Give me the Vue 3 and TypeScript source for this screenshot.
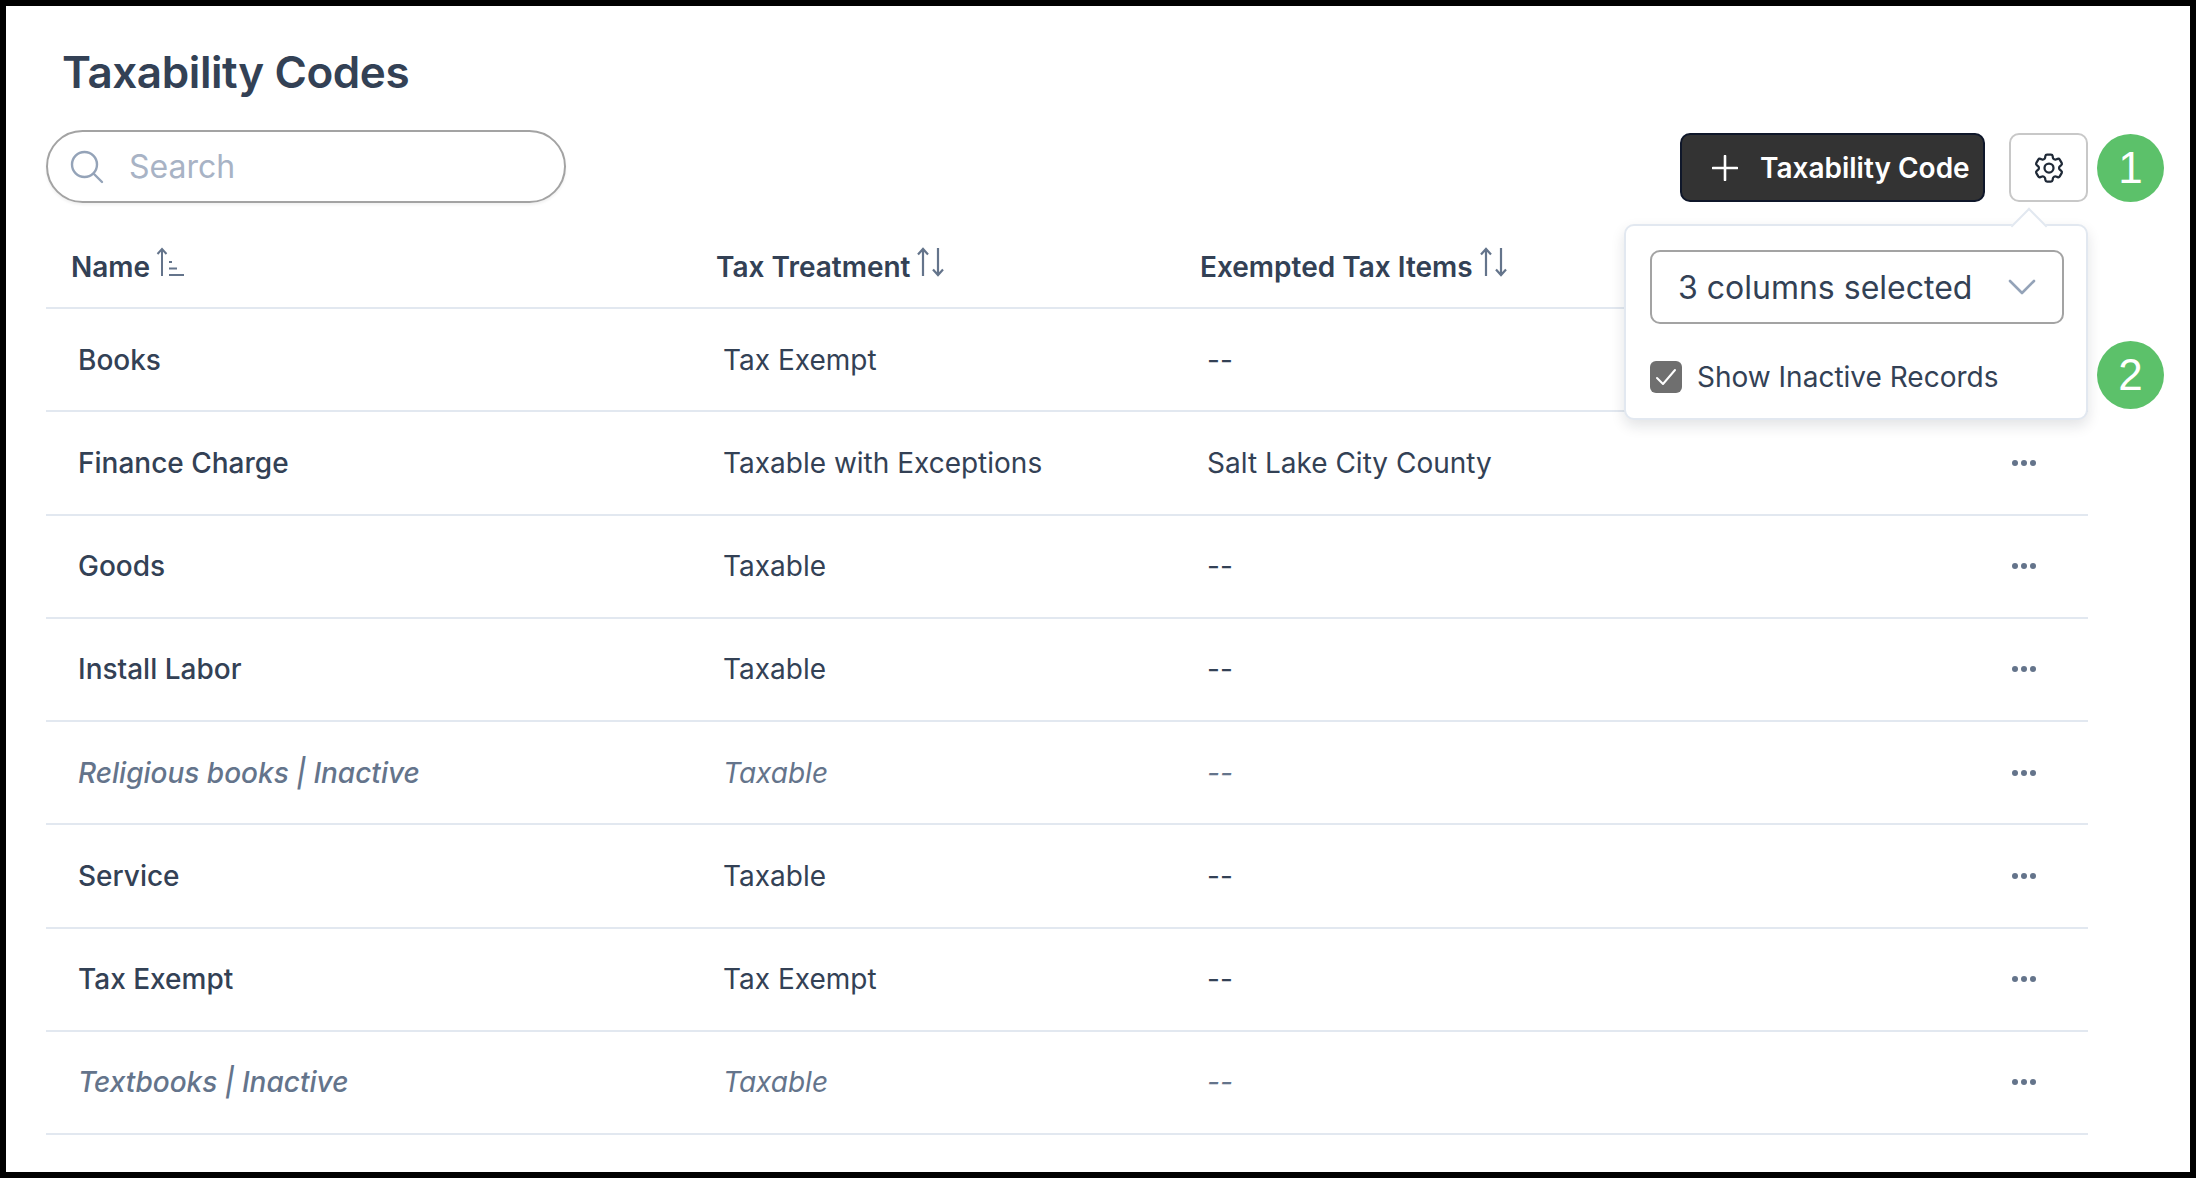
<script setup lang="ts">
interface Row { name: string; treatment: string; items: string; inactive?: boolean }
const rows: Row[] = [
  { name: 'Books', treatment: 'Tax Exempt', items: '--' },
  { name: 'Finance Charge', treatment: 'Taxable with Exceptions', items: 'Salt Lake City County' },
  { name: 'Goods', treatment: 'Taxable', items: '--' },
  { name: 'Install Labor', treatment: 'Taxable', items: '--' },
  { name: 'Religious books | Inactive', treatment: 'Taxable', items: '--', inactive: true },
  { name: 'Service', treatment: 'Taxable', items: '--' },
  { name: 'Tax Exempt', treatment: 'Tax Exempt', items: '--' },
  { name: 'Textbooks | Inactive', treatment: 'Taxable', items: '--', inactive: true },
]
</script>

<template>
  <div class="frame">
    <h1 class="title">Taxability Codes</h1>
    <div class="toolbar">
      <div class="search">
        <svg class="search-icon" viewBox="0 0 34 34" fill="none" stroke="#94a3b8" stroke-width="2.4" stroke-linecap="round">
          <circle cx="14.5" cy="14.5" r="12.5" />
          <path d="M24 24l8 8" />
        </svg>
        <span class="placeholder">Search</span>
      </div>
      <div class="actions">
        <button class="primary" type="button">
          <svg class="plus" viewBox="0 0 26 26" fill="none" stroke="#fff" stroke-width="2.6" stroke-linecap="round">
            <path d="M13 1v24M1 13h24" />
          </svg>
          <span>Taxability Code</span>
        </button>
        <button class="gear" type="button" aria-label="Settings">
          <svg viewBox="0 0 24 24" fill="none" stroke="#1f2937" stroke-width="1.5" stroke-linecap="round" stroke-linejoin="round">
            <path d="M9.594 3.94c.09-.542.56-.94 1.11-.94h2.593c.55 0 1.02.398 1.11.94l.213 1.281c.063.374.313.686.645.87.074.04.147.083.22.127.324.196.72.257 1.075.124l1.217-.456a1.125 1.125 0 011.37.49l1.296 2.247a1.125 1.125 0 01-.26 1.431l-1.003.827c-.293.24-.438.613-.431.992a6.759 6.759 0 010 .255c-.007.378.138.75.43.99l1.005.828c.424.35.534.954.26 1.43l-1.298 2.247a1.125 1.125 0 01-1.369.491l-1.217-.456c-.355-.133-.75-.072-1.076.124a6.57 6.57 0 01-.22.128c-.331.183-.581.495-.644.869l-.213 1.28c-.09.543-.56.941-1.11.941h-2.594c-.55 0-1.02-.398-1.11-.94l-.213-1.281c-.062-.374-.312-.686-.644-.87a6.52 6.52 0 01-.22-.127c-.325-.196-.72-.257-1.076-.124l-1.217.456a1.125 1.125 0 01-1.369-.49l-1.297-2.247a1.125 1.125 0 01.26-1.431l1.004-.827c.292-.24.437-.613.43-.992a6.932 6.932 0 010-.255c.007-.378-.138-.75-.43-.99l-1.004-.828a1.125 1.125 0 01-.26-1.43l1.297-2.247a1.125 1.125 0 011.37-.491l1.216.456c.356.133.751.072 1.076-.124.072-.044.146-.087.22-.128.332-.183.582-.495.644-.869l.214-1.281z" />
            <path d="M15 12a3 3 0 11-6 0 3 3 0 016 0z" />
          </svg>
        </button>
        <span class="badge badge-one">1</span>
        <div class="popover">
          <div class="caret"></div>
          <div class="select">
            <span>3 columns selected</span>
            <svg class="chevron" viewBox="0 0 28 16" fill="none" stroke="#94a3b8" stroke-width="2.6" stroke-linecap="round" stroke-linejoin="round">
              <path d="M2 2l12 12L26 2" />
            </svg>
          </div>
          <label class="check-row">
            <span class="checkbox">
              <svg viewBox="0 0 32 32" fill="none" stroke="#fff" stroke-width="2" stroke-linecap="round" stroke-linejoin="round">
                <path d="M7 17l6 6L25 9" />
              </svg>
            </span>
            <span>Show Inactive Records</span>
          </label>
        </div>
        <span class="badge badge-two">2</span>
      </div>
    </div>

    <div class="grid header">
      <div class="th">
        <span>Name</span>
        <svg class="sort sort-name" viewBox="0 0 30 30" fill="none" stroke="#64748b" stroke-width="2">
          <path d="M6 29V2M1.500 7L6 2l4.500 5" />
          <path d="M13 15h3M13 21.500h8M13 28h15" />
        </svg>
      </div>
      <div class="th">
        <span>Tax Treatment</span>
        <svg class="sort" viewBox="0 0 30 30" fill="none" stroke="#64748b" stroke-width="2.200">
          <path d="M7 29V2M2 7.500L7 2l5 5.500" />
          <path d="M22 1v27M17 22.500l5 5.500 5-5.500" />
        </svg>
      </div>
      <div class="th">
        <span>Exempted Tax Items</span>
        <svg class="sort" viewBox="0 0 30 30" fill="none" stroke="#64748b" stroke-width="2.200">
          <path d="M7 29V2M2 7.500L7 2l5 5.500" />
          <path d="M22 1v27M17 22.500l5 5.500 5-5.500" />
        </svg>
      </div>
    </div>

    <div v-for="row in rows" :key="row.name" class="grid row" :class="{ inactive: row.inactive }">
      <div class="cell name">{{ row.name }}</div>
      <div class="cell">{{ row.treatment }}</div>
      <div class="cell">{{ row.items }}</div>
      <div class="dots"><i></i><i></i><i></i></div>
    </div>
  </div>
</template>

<style>
html, body { margin: 0; background: #fff; }
</style>

<style scoped>
.frame {
  box-sizing: border-box;
  width: 2196px;
  height: 1178px;
  border: 6px solid #000;
  background: #fff;
  padding: 0 102px 0 40px;
  overflow: hidden;
  font-family: Inter, "Liberation Sans", sans-serif;
  color: #334155;
}
.title {
  margin: 42px 0 0 16px;
  font-size: 44px;
  line-height: 48px;
  font-weight: 600;
  letter-spacing: -0.4px;
  color: #334155;
}
.toolbar {
  margin-top: 34px;
  display: flex;
  justify-content: space-between;
  align-items: flex-start;
}
.search {
  box-sizing: border-box;
  width: 520px;
  height: 73px;
  display: flex;
  align-items: center;
  padding-left: 22px;
  gap: 25px;
  border: 2px solid #a3a3a3;
  border-radius: 37px;
  box-shadow: 0 2px 3px rgba(0, 0, 0, .06);
}
.search-icon { width: 34px; height: 34px; }
.placeholder { font-size: 32px; color: #a8b3c5; }
.actions {
  position: relative;
  display: flex;
  align-items: center;
  gap: 24px;
  margin-top: 3px;
}
.primary {
  box-sizing: border-box;
  width: 305px;
  height: 69px;
  display: flex;
  align-items: center;
  padding: 0 0 0 30px;
  gap: 22px;
  background: #333;
  border: 2px solid #0f172a;
  border-radius: 10px;
  color: #fff;
  font: 600 28px Inter, "Liberation Sans", sans-serif;
}
.plus { width: 26px; height: 26px; }
.gear {
  box-sizing: border-box;
  width: 79px;
  height: 69px;
  padding: 0;
  display: flex;
  align-items: center;
  justify-content: center;
  background: #fff;
  border: 2px solid #c8c8c8;
  border-radius: 10px;
}
.gear svg { width: 36px; height: 36px; }
.badge {
  position: absolute;
  left: 417px;
  width: 67px;
  height: 68px;
  border-radius: 50%;
  background: #5cc16a;
  color: #fff;
  display: flex;
  align-items: center;
  justify-content: center;
  font: 400 44px "Liberation Sans", Arial, sans-serif;
}
.badge-one { top: 1px; }
.badge-two { top: 208px; }
.popover {
  position: absolute;
  top: 91px;
  left: -56px;
  box-sizing: border-box;
  width: 464px;
  height: 196px;
  padding: 24px 24px 0;
  background: #fff;
  border: 2px solid #e2e8f0;
  border-radius: 10px;
  box-shadow: 0 6px 14px rgba(15, 23, 42, .12);
  z-index: 2;
}
.caret {
  position: absolute;
  top: -13px;
  left: 390px;
  width: 24px;
  height: 24px;
  background: #fff;
  border-top: 2px solid #e2e8f0;
  border-left: 2px solid #e2e8f0;
  transform: rotate(45deg);
}
.select {
  box-sizing: border-box;
  width: 414px;
  height: 74px;
  display: flex;
  align-items: center;
  justify-content: space-between;
  padding: 0 26px;
  border: 2px solid #a3a3a3;
  border-radius: 10px;
  font-size: 32px;
  color: #334155;
}
.chevron { width: 28px; height: 16px; }
.check-row {
  display: flex;
  align-items: center;
  gap: 15px;
  margin-top: 36px;
  font-size: 28px;
}
.checkbox {
  width: 32px;
  height: 32px;
  border-radius: 6px;
  background: #6f6f6f;
  display: block;
}
.checkbox svg { width: 32px; height: 32px; display: block; }
.grid {
  display: grid;
  grid-template-columns: 645px 484px 1fr 104px;
  box-sizing: border-box;
  border-bottom: 2px solid #e2e8f0;
}
.header {
  height: 106px;
  align-items: end;
  padding-bottom: 23px;
  font-size: 28px;
  font-weight: 600;
}
.th { display: flex; align-items: flex-end; gap: 6px; padding-left: 25px; line-height: 34px; }
.sort { width: 30px; height: 30px; margin-bottom: 7px; flex: none; }
.row {
  height: 103.250px;
  align-items: center;
  font-size: 28px;
}
.cell { padding-left: 32px; line-height: 34px; }
.name { font-weight: 500; }
.inactive .cell { font-style: italic; color: #64748b; }
.dots { display: flex; gap: 3px; padding-left: 28px; }
.dots i { width: 6px; height: 6px; border-radius: 50%; background: #64748b; display: block; }
</style>
